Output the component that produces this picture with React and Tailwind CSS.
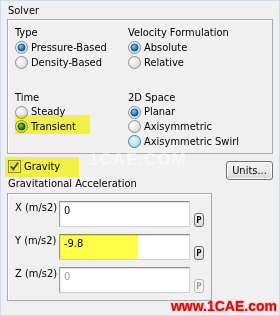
import React from "react";

const FONT = { fontFamily: '"DejaVu Sans Condensed", Tahoma, "Liberation Sans", sans-serif' };

function Radio({ checked, hover, id }) {
  return (
    <svg width="13" height="13" viewBox="0 0 13 13" className="shrink-0">
      <defs>
        <radialGradient id={`rg-${id}`} cx="0.35" cy="0.35" r="0.75">
          <stop offset="0" stopColor={hover ? "#eaf6fd" : "#ffffff"} />
          <stop offset="1" stopColor={hover ? "#a8d6f2" : "#d4d4d4"} />
        </radialGradient>
        <radialGradient id={`rd-${id}`} cx="0.4" cy="0.35" r="0.7">
          <stop offset="0" stopColor="#7fd0ff" />
          <stop offset="0.6" stopColor="#1d7fc8" />
          <stop offset="1" stopColor="#0b4c8a" />
        </radialGradient>
      </defs>
      <circle cx="6.5" cy="6.5" r="6" fill={`url(#rg-${id})`} stroke={hover ? "#3c7fb1" : "#8e8f8f"} strokeWidth="1" />
      {checked && <circle cx="6.5" cy="6.5" r="3.6" fill={`url(#rd-${id})`} stroke="#174a7c" strokeWidth="0.8" />}
    </svg>
  );
}

function RadioRow({ label, checked, hover, id, h }) {
  return (
    <div className={`flex items-center gap-[3px] ${h}`}>
      <Radio checked={checked} hover={hover} id={id} />
      <span className="leading-[14px] text-black">{label}</span>
    </div>
  );
}

function Checkbox() {
  return (
    <svg width="13" height="13" viewBox="0 0 13 13" className="shrink-0">
      <defs>
        <linearGradient id="cbg" x1="0" y1="0" x2="1" y2="1">
          <stop offset="0" stopColor="#dcdcdc" />
          <stop offset="1" stopColor="#ffffff" />
        </linearGradient>
      </defs>
      <rect x="0.5" y="0.5" width="12" height="12" fill="#f4f4f4" stroke="#8e8f8f" />
      <rect x="2.5" y="2.5" width="8" height="8" fill="url(#cbg)" stroke="#c4c4c4" strokeWidth="0.6" />
      <path d="M3 6.2 L5.3 9.2 L10 2.8" fill="none" stroke="#3b4a6b" strokeWidth="1.8" />
    </svg>
  );
}

function PButton({ disabled }) {
  return (
    <div
      className={`w-[10px] h-[14px] self-end rounded-[3px] border flex items-center justify-center text-[9px] font-bold leading-none ${
        disabled
          ? "border-[#b5b9bc] bg-[#f4f4f4] text-[#9a9a9a]"
          : "border-[#6f6f6f] bg-gradient-to-b from-[#f6f6f6] to-[#dcdcdc] text-black"
      }`}
      style={{ fontFamily: '"DejaVu Sans Mono", monospace' }}
    >
      P
    </div>
  );
}

function InputRow({ label, value, disabled }) {
  return (
    <div className="flex h-[26px]">
      <div className="w-[44px] leading-[14px] text-black">{label}</div>
      <div className="w-[131px] h-[26px] border border-t-[#8d8d8d] border-l-[#9b9b9b] border-r-[#d3d3d3] border-b-[#cfcfcf] bg-white">
        <div className="h-full border-t border-l border-t-[#e2e2e2] border-l-[#ececec] pl-[3px] pt-[1px] leading-[14px]">
          <span className={disabled ? "text-[#9a9a9a]" : "text-black"}>{value}</span>
        </div>
      </div>
      <div className="ml-[4px] flex">
        <PButton disabled={disabled} />
      </div>
    </div>
  );
}

export default function App() {
  return (
    <div
      className="relative w-[280px] h-[316px] overflow-hidden bg-[#f0f0f0] border border-[#d0dbe7] text-[11px] pl-[6px] pt-[3px]"
      style={FONT}
    >
      <div className="h-[14px] leading-[14px] pl-[1px] text-black">Solver</div>
      <div className="mt-[1px] w-[266px] h-[135px] border border-[#a9a9a9] shadow-[inset_1px_1px_0_#ffffff] flex pl-[7px] pt-[6px]">
        <div className="w-[113px] flex flex-col">
          <div className="h-[14px] leading-[14px]">Type</div>
          <RadioRow id="a1" label="Pressure-Based" checked h="h-[15px]" />
          <RadioRow id="a2" label="Density-Based" h="h-[15px]" />
          <div className="mt-[21px] h-[14px] leading-[14px]">Time</div>
          <RadioRow id="a3" label="Steady" h="h-[14px]" />
          <RadioRow id="a4" label="Transient" checked h="h-[15px]" />
        </div>
        <div className="flex flex-col">
          <div className="h-[14px] leading-[14px]">Velocity Formulation</div>
          <RadioRow id="b1" label="Absolute" checked h="h-[15px]" />
          <RadioRow id="b2" label="Relative" h="h-[15px]" />
          <div className="mt-[21px] h-[14px] leading-[14px]">2D Space</div>
          <RadioRow id="b3" label="Planar" checked h="h-[14px]" />
          <RadioRow id="b4" label="Axisymmetric" h="h-[15px]" />
          <RadioRow id="b5" label="Axisymmetric Swirl" hover h="h-[15px]" />
        </div>
      </div>

      <div className="flex w-[266px] justify-between">
        <div className="flex flex-col">
          <div className="mt-[5px] h-[15px] flex items-center gap-[3px] pl-[1px]">
            <Checkbox />
            <span className="leading-[14px]">Gravity</span>
          </div>
          <div className="mt-[3px] h-[14px] leading-[14px] pl-[1px]">Gravitational Acceleration</div>
        </div>
        <div className="mt-[7px] w-[47px] h-[19px] rounded-[3px] border border-[#707070] bg-gradient-to-b from-[#f3f3f3] via-[#ebebeb] to-[#d6d6d6] flex items-center justify-center leading-[14px] shadow-[inset_0_0_0_1px_#fbfbfb]">
          Units...
        </div>
      </div>

      <div className="mt-[2px] w-[205px] h-[108px] border border-[#a9a9a9] shadow-[inset_1px_1px_0_#ffffff] pl-[7px] pt-[7px] flex flex-col gap-[7px]">
        <InputRow label="X (m/s2)" value="0" />
        <InputRow label="Y (m/s2)" value="-9.8" />
        <InputRow label="Z (m/s2)" value="0" disabled />
      </div>

      {/* highlights */}
      <div className="absolute left-[14px] top-[114px] w-[75px] h-[19px] bg-[#ffff4a] mix-blend-multiply" />
      <div className="absolute left-[4px] top-[156px] w-[74px] h-[20px] bg-[#ffff4a] mix-blend-multiply" />
      <div className="absolute left-[59px] top-[233px] w-[78px] h-[25px] bg-[#ffff4a] mix-blend-multiply" />

      {/* watermarks */}
      <div className="absolute left-[88px] top-[146px] text-[17px] font-bold text-white/50 tracking-[1px]" style={{ fontFamily: '"Liberation Sans", sans-serif' }}>
        1CAE.COM
      </div>
      <div
        className="absolute right-[2px] bottom-[2px] text-[14px] font-bold text-[#d01010] leading-[14px] [text-shadow:0_0_2px_#ff5050]"
        style={{ fontFamily: '"Liberation Sans", sans-serif' }}
      >
        www.1CAE.com
      </div>
    </div>
  );
}
